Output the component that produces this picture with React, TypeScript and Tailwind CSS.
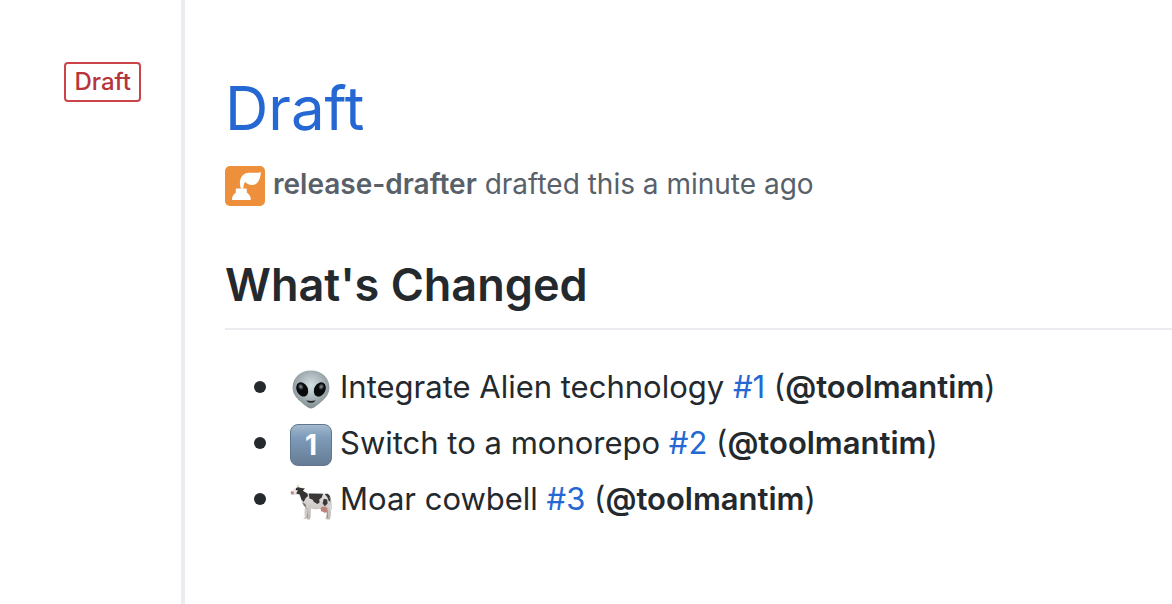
import type { ReactNode } from "react";

function DrafterAvatar() {
  return (
    <svg viewBox="0 0 40 40" className="size-10 shrink-0 rounded-[5px]" role="img" aria-label="release-drafter avatar">
      <rect width="40" height="40" fill="#ed8f3b" />
      <path
        d="M8.2 34C7.2 34 6.8 33.4 7 32.4C7.6 29.6 9 27.8 10.8 26.4V23.4C10.8 22.8 11.2 22.4 11.8 22.4H20.8C21.4 22.4 21.8 22.8 21.8 23.4V26.4C23.8 27.8 25.2 29.6 25.8 32.4C26 33.4 25.6 34 24.6 34Z"
        fill="#fff"
      />
      <path
        d="M15.8 22.6C13.8 16.6 15 10.4 19.4 8C23.8 5.6 29.4 7.8 36 6.2C35.2 12.4 33.4 17.6 29 18.8C25.6 19.6 22.6 18.4 20.2 16C19 17.8 18.4 19.6 18.4 22.6Z"
        fill="#fff"
      />
    </svg>
  );
}

function AlienIcon() {
  return (
    <svg viewBox="0 0 42 42" className="size-full" role="img" aria-label="alien">
      <defs>
        <radialGradient id="skin" cx="0.5" cy="0.4" r="0.62">
          <stop offset="0" stopColor="#d3e0e4" />
          <stop offset="0.5" stopColor="#acb8bc" />
          <stop offset="1" stopColor="#7e898c" />
        </radialGradient>
        <radialGradient id="glint">
          <stop offset="0" stopColor="#8f999d" />
          <stop offset="1" stopColor="#111416" />
        </radialGradient>
      </defs>
      <path
        d="M21 2.6C10.5 2.6 2.6 9.6 2.6 19.2C2.6 25.6 5.8 29.6 10.4 33.6C14 36.8 17.8 40.4 21 40.4C24.2 40.4 28 36.8 31.6 33.6C36.2 29.6 39.4 25.6 39.4 19.2C39.4 9.6 31.5 2.6 21 2.6Z"
        fill="url(#skin)"
      />
      <g transform="rotate(-28 12.2 21.4)">
        <ellipse cx="12.2" cy="21.4" rx="5.6" ry="7.4" fill="#080a0b" />
        <ellipse cx="12.2" cy="18.4" rx="2.7" ry="3.2" fill="url(#glint)" />
      </g>
      <g transform="rotate(28 29.8 21.4)">
        <ellipse cx="29.8" cy="21.4" rx="5.6" ry="7.4" fill="#080a0b" />
        <ellipse cx="29.8" cy="18.4" rx="2.7" ry="3.2" fill="url(#glint)" />
      </g>
      <path d="M16.4 32.2C19 33.2 23 33.2 25.6 32.2C24.6 34 23 34.8 21 34.8C19 34.8 17.4 34 16.4 32.2Z" fill="#22282a" />
    </svg>
  );
}

function CowIcon() {
  return (
    <svg viewBox="0 0 42 42" className="size-full" role="img" aria-label="cow">
      <defs>
        <linearGradient id="hide" x1="0" y1="0" x2="0" y2="1">
          <stop offset="0" stopColor="#eceae9" />
          <stop offset="1" stopColor="#bdb8b5" />
        </linearGradient>
      </defs>
      <path d="M15.5 27L16.4 36.2L14.6 38.2H17.8L19 28ZM34.4 26L37 31L36.4 37.4L35 38.4H38.4L39.6 30L38.6 24Z" fill="#96918f" />
      <path
        d="M1 11.4L5.6 8.2L8 6.8L12.4 7.8L14.4 12L18 13.2L29 13.6L37 13.4C39.6 14.2 40.6 17.6 40.4 21.5L39.6 27L41.2 31.5L40.4 38L39.6 39.4H36.6L38 37.2L37.8 32L33.4 27.4C28.4 29.6 24 29.6 21 28.6L20.6 37.6L19.8 39.4H16.8L18 37L17.2 28.6C13.4 26.4 11.5 22.4 10.4 17.4L8.4 14.6L3.4 14.8L1 13.4Z"
        fill="url(#hide)"
      />
      <path d="M15 27L14.4 33L14.8 37L13.2 39H16.4L17.6 30Z" fill="#d0cbc8" />
      <path d="M7.4 7.2C7 5.6 7.5 4.6 9 4.7C8.2 5.6 8.4 6.5 8.8 7.2Z" fill="#d9bd7d" />
      <path d="M5.8 8L8.4 7.2L11 8L15 8.6L12.8 10.8L17.4 13.4L18 16L15.4 18.4L13.8 22L11.4 19.4L9.8 14.6L6.2 13.4L7.6 10.8Z" fill="#363333" />
      <path d="M4.8 8.2L7.6 10.2L4 12.5L1.6 11.4Z" fill="#eee9e5" />
      <path d="M1 11.2L4 11.8L3.6 14.5L1.6 14.4L.6 13Z" fill="#b98b81" />
      <circle cx="6.5" cy="9.5" r=".8" fill="#1c1919" />
      <path d="M18.8 13.4L33 13.7L31.8 17.4L29.2 19.4L29.6 22.6L27.4 24L24 22L22.4 19.4L19.4 18.6Z" fill="#3b3838" />
      <path d="M34.6 14L37.6 13.7C40.6 15.5 40.7 18 40.4 21.4L38.8 21L37.4 17.2ZM33.8 18.8L37.2 19.4L37.6 23.4L34.8 26.2L32.6 23.2Z" fill="#3b3838" />
      <path d="M12.4 22.4L15.4 24L16.4 27.4L14 25.8Z" fill="#77716e" />
      <path d="M30.4 28.4C31.4 26.4 34.4 26 37.4 28L37.6 32.4L35.6 32.2L35 33.6L33.8 32L31.4 31.6Z" fill="#bb817a" />
      <path d="M39.8 17C41.2 21 40.8 25 41.2 29.5" fill="none" stroke="#a8a19d" strokeWidth=".9" />
    </svg>
  );
}

function KeycapOne() {
  return (
    <span className="flex size-full items-center justify-center rounded-lg border border-[#5f7690] bg-linear-to-b from-[#a4b9cc] via-[#7f9cbb] via-30% to-[#667c94] text-[28px] leading-none font-bold text-white">
      1
    </span>
  );
}

type Change = { icon: ReactNode; title: string; issue: string };

const changes: Change[] = [
  { icon: <AlienIcon />, title: "Integrate Alien technology", issue: "#1" },
  { icon: <KeycapOne />, title: "Switch to a monorepo", issue: "#2" },
  { icon: <CowIcon />, title: "Moar cowbell", issue: "#3" },
];

export default function App() {
  return (
    <div className="flex min-h-screen bg-white font-['Inter',sans-serif] text-[#24292e]">
      <aside className="flex w-[185px] shrink-0 items-start justify-end border-r-4 border-[#eaecef] pt-[62px] pr-10">
        <span className="rounded-sm border-2 border-[#cb444a] px-2 text-2xl leading-9 font-medium text-[#b6343a]">Draft</span>
      </aside>
      <main className="min-w-0 flex-1 pt-[72px] pl-10">
        <h1 className="text-[60px] leading-[72px]">
          <a href="#draft" className="text-[#2568d3]">Draft</a>
        </h1>
        <p className="mt-[22px] flex items-center gap-2 text-[28px] leading-10 text-[#586069]">
          <DrafterAvatar />
          <span className="-mt-1">
            <a href="#release-drafter" className="font-semibold">release-drafter</a> drafted this a minute ago
          </span>
        </p>
        <h2 className="mt-12 border-b-2 border-[#eaecef] pb-3 text-[45px] leading-[62px] font-semibold">What's Changed</h2>
        <ul className="mt-[33px] flex flex-col gap-2 pl-[29px]">
          {changes.map((change) => (
            <li key={change.issue} className="flex items-center text-[31px] leading-[48px]">
              <span className="mr-6 size-3 shrink-0 rounded-full bg-[#24292e]" />
              <span className="mt-1 mr-2 size-[42px] shrink-0">{change.icon}</span>
              <span>
                {change.title} <a href={change.issue} className="text-[#2568d3]">{change.issue}</a> (
                <a href="#toolmantim" className="font-semibold">@toolmantim</a>)
              </span>
            </li>
          ))}
        </ul>
      </main>
    </div>
  );
}
